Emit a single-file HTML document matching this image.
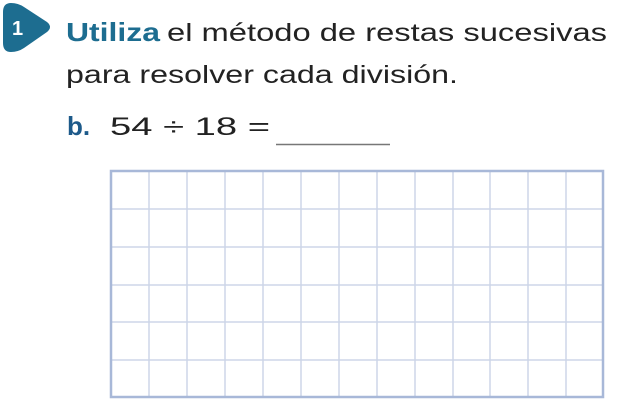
<!DOCTYPE html>
<html><head><style>
html,body{margin:0;padding:0;background:#fff;width:618px;height:409px;overflow:hidden}
</style></head><body>
<svg width="618" height="409" xmlns="http://www.w3.org/2000/svg" style="display:block">
<path d="M11 3 Q3 3 3 12 L3 43 Q3 52 11 52 Q18 52 24 48 L47 32 Q53 27 47 22 L24 7 Q18 3 11 3 Z" fill="#1d6d90"/>
<text x="12" y="35" font-family="Liberation Sans, sans-serif" font-weight="bold" font-size="20" fill="#fff">1</text>
<g font-family="Liberation Sans, sans-serif" font-size="25">
<text x="66" y="41" textLength="94" lengthAdjust="spacingAndGlyphs" fill="#1d6d90" font-weight="bold" font-size="26">Utiliza</text>
<text x="167" y="41" textLength="440" lengthAdjust="spacingAndGlyphs" fill="#222">el método de restas sucesivas</text>
<text x="66" y="83" textLength="392" lengthAdjust="spacingAndGlyphs" fill="#222">para resolver cada división.</text>
<text x="67" y="135" fill="#1d5a8a" font-weight="bold" font-size="26">b.</text>
<text x="110" y="135" textLength="160" lengthAdjust="spacingAndGlyphs" fill="#222">54 ÷ 18 =</text>
</g>
<line x1="276" y1="144.5" x2="390" y2="144.5" stroke="#777" stroke-width="1.5"/>
<g stroke="#cdd6e8" stroke-width="1.5">
<line x1="149" y1="171" x2="149" y2="397"/><line x1="187" y1="171" x2="187" y2="397"/>
<line x1="225" y1="171" x2="225" y2="397"/><line x1="263" y1="171" x2="263" y2="397"/>
<line x1="301" y1="171" x2="301" y2="397"/><line x1="339" y1="171" x2="339" y2="397"/>
<line x1="377" y1="171" x2="377" y2="397"/><line x1="415" y1="171" x2="415" y2="397"/>
<line x1="453" y1="171" x2="453" y2="397"/><line x1="490" y1="171" x2="490" y2="397"/>
<line x1="528" y1="171" x2="528" y2="397"/><line x1="566" y1="171" x2="566" y2="397"/>
<line x1="111" y1="209" x2="603" y2="209"/><line x1="111" y1="247" x2="603" y2="247"/>
<line x1="111" y1="285" x2="603" y2="285"/><line x1="111" y1="322" x2="603" y2="322"/>
<line x1="111" y1="360" x2="603" y2="360"/>
</g>
<rect x="111" y="171" width="492" height="226" fill="none" stroke="#a8b8d8" stroke-width="2.5"/>
</svg>
</body></html>
